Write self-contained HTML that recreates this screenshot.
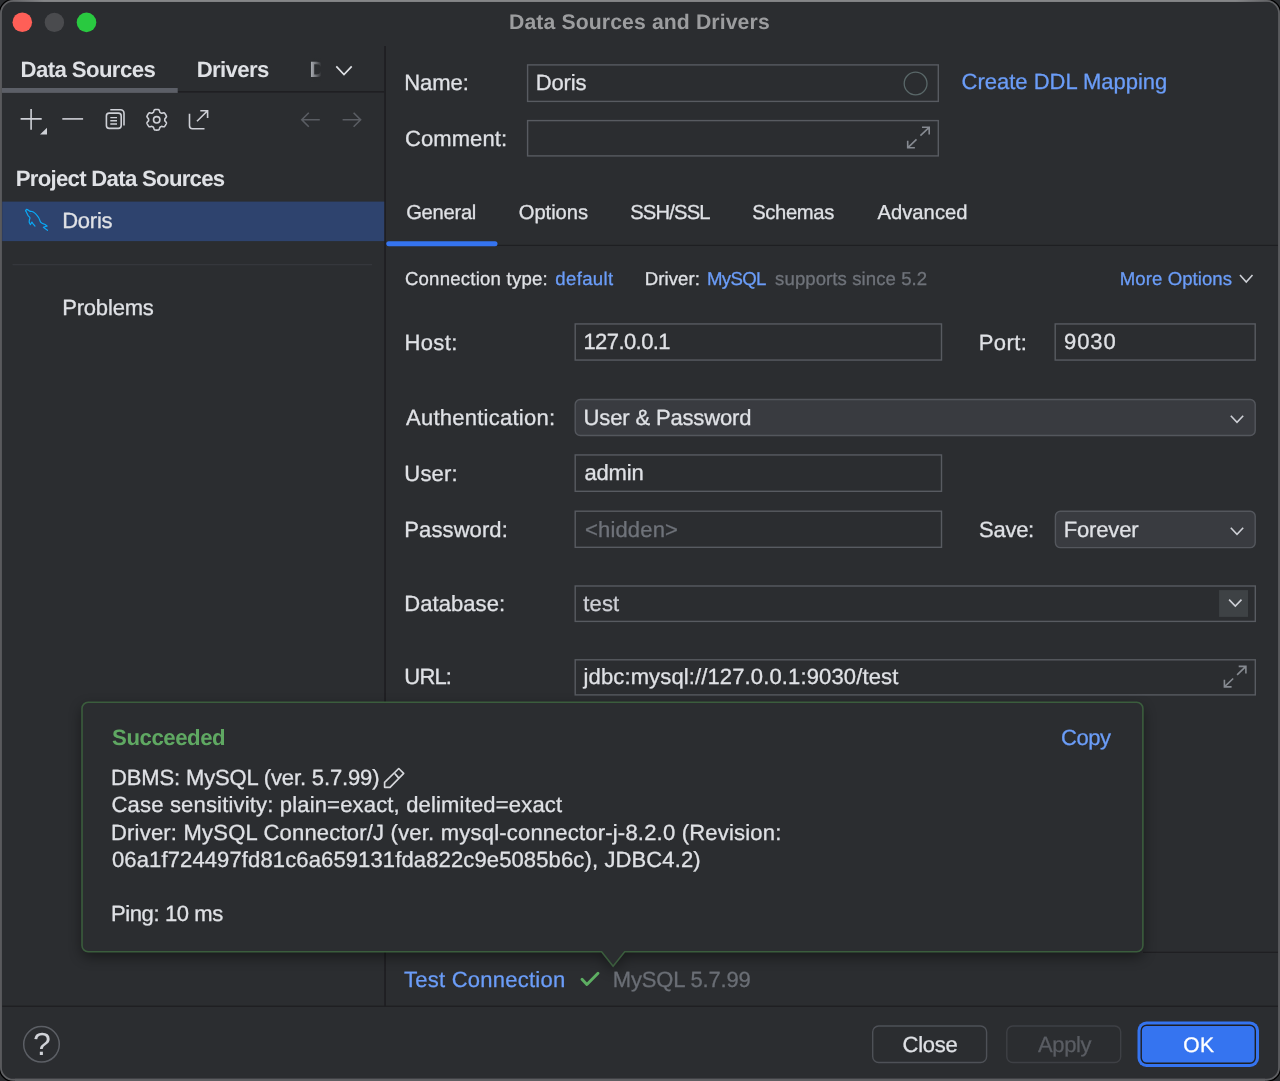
<!DOCTYPE html>
<html lang="en">
<head>
<meta charset="utf-8">
<title>Data Sources and Drivers</title>
<style>
html,body{margin:0;padding:0;}
body{width:1280px;height:1081px;overflow:hidden;background:#2b2d30;position:relative;font-family:"Liberation Sans",sans-serif;}
#shapes{position:absolute;left:0;top:0;display:block;}
#texts{position:absolute;left:0;top:0;width:1280px;height:1081px;will-change:transform;text-rendering:geometricPrecision;}
.t{position:absolute;white-space:pre;line-height:1;font-family:"Liberation Sans",sans-serif;-webkit-text-stroke:0.3px currentColor;}
#t_dfade{position:absolute;left:309.6px;top:58px;width:11.8px;height:24px;overflow:hidden;}
#t_dfade .t{left:0;top:1px;}
#t_dfade i{position:absolute;left:0;top:0;width:100%;height:100%;background:linear-gradient(90deg,rgba(43,45,48,0) 10%,rgba(43,45,48,0.9) 95%);}
</style>
</head>
<body>
<svg id="shapes" width="1280" height="1081" viewBox="0 0 1280 1081">
<defs><filter id="sh" x="-5%" y="-10%" width="110%" height="125%"><feGaussianBlur stdDeviation="7"/></filter><linearGradient id="fade" x1="0" x2="1" y1="0" y2="0"><stop offset="0" stop-color="#2b2d30" stop-opacity="0"/><stop offset="1" stop-color="#2b2d30" stop-opacity="1"/></linearGradient><linearGradient id="topg" x1="0" x2="1" y1="0" y2="0"><stop offset="0" stop-color="#858688" stop-opacity="0"/><stop offset="0.03" stop-color="#858688" stop-opacity="1"/><stop offset="0.97" stop-color="#858688" stop-opacity="1"/><stop offset="1" stop-color="#858688" stop-opacity="0"/></linearGradient></defs>
<rect x="-0.4" y="-0.4" width="1280.8" height="1081.6" rx="13.6" fill="none" stroke="#000" stroke-width="1.6"/>
<rect x="0.95" y="0.95" width="1278.1" height="1078.8" rx="12.3" fill="#2b2d30" stroke="#5d5e61" stroke-width="1.8"/>
<rect x="6" y="0" width="1268" height="1.9" fill="url(#topg)"/>
<path d="M15 1080H1265" stroke="#5d5e61" stroke-width="2.4" fill="none"/>
<circle cx="22.3" cy="22.3" r="9.8" fill="#ff5f57"/>
<circle cx="54.4" cy="22.4" r="9.7" fill="#4a4b4e"/>
<circle cx="86.5" cy="22.4" r="9.8" fill="#29c940"/>
<rect x="2" y="91.1" width="382.2" height="1.5" fill="#1e1f22"/>
<rect x="2" y="88" width="175.7" height="4.9" fill="#5c5f67"/>
<rect x="384.2" y="46" width="1.7" height="960.6" fill="#1e1f22"/>
<rect x="2.2" y="201.6" width="382" height="39.5" fill="#2e436e"/>
<rect x="12.5" y="264.2" width="359.5" height="1" fill="#393b40"/>
<g fill="none" stroke="#ced0d6" stroke-width="1.6">
<path d="M20.6 118.9H41.7M31.1 108.9V129.7"/>
<path d="M62.3 118.9H83.1"/>
<rect x="106.4" y="113.1" width="14.8" height="15.3" rx="2.8"/>
<path d="M110.3 109.8H120.6A3.4 3.4 0 0 1 124 113.2V125.5"/>
<path d="M110.3 117.6H117M110.3 120.8H117M110.3 124H117" stroke-width="1.4"/>
<path d="M189.5 113.7V125.8A3 3 0 0 0 192.5 128.8H204.5"/>
<path d="M197 121.3L207.3 111M200.3 110.7H207.6V117.9"/>
</g>
<path d="M47 127.8V134.4H40Z" fill="#ced0d6"/>
<path d="M164.80 119.80L164.79 120.22L164.79 120.65L165.19 121.15L165.68 121.71L166.19 122.34L166.50 122.98L166.32 123.49L166.11 123.99L165.88 124.48L165.62 124.95L165.34 125.41L165.03 125.85L164.70 126.28L164.35 126.69L163.65 126.75L162.84 126.62L162.11 126.48L161.48 126.38L161.11 126.59L160.75 126.81L160.38 127.02L160.01 127.23L159.78 127.83L159.54 128.53L159.24 129.29L158.84 129.87L158.31 129.97L157.78 130.04L157.24 130.09L156.70 130.10L156.16 130.09L155.62 130.04L155.09 129.97L154.56 129.87L154.16 129.29L153.86 128.53L153.62 127.83L153.39 127.23L153.02 127.02L152.65 126.81L152.29 126.59L151.92 126.38L151.29 126.48L150.56 126.62L149.75 126.75L149.05 126.69L148.70 126.28L148.37 125.85L148.06 125.41L147.78 124.95L147.52 124.48L147.29 123.99L147.08 123.49L146.90 122.98L147.21 122.34L147.72 121.71L148.21 121.15L148.61 120.65L148.61 120.22L148.60 119.80L148.61 119.38L148.61 118.95L148.21 118.45L147.72 117.89L147.21 117.26L146.90 116.62L147.08 116.11L147.29 115.61L147.52 115.12L147.78 114.65L148.06 114.19L148.37 113.75L148.70 113.32L149.05 112.91L149.75 112.85L150.56 112.98L151.29 113.12L151.92 113.22L152.29 113.01L152.65 112.79L153.02 112.58L153.39 112.37L153.62 111.77L153.86 111.07L154.16 110.31L154.56 109.73L155.09 109.63L155.62 109.56L156.16 109.51L156.70 109.50L157.24 109.51L157.78 109.56L158.31 109.63L158.84 109.73L159.24 110.31L159.54 111.07L159.78 111.77L160.01 112.37L160.38 112.58L160.75 112.79L161.11 113.01L161.48 113.22L162.11 113.12L162.84 112.98L163.65 112.85L164.35 112.91L164.70 113.32L165.03 113.75L165.34 114.19L165.62 114.65L165.88 115.12L166.11 115.61L166.32 116.11L166.50 116.62L166.19 117.26L165.68 117.89L165.19 118.45L164.79 118.95L164.79 119.38Z" fill="none" stroke="#ced0d6" stroke-width="1.6" stroke-linejoin="round"/>
<circle cx="156.7" cy="119.8" r="3.2" fill="none" stroke="#ced0d6" stroke-width="1.6"/>
<g fill="none" stroke="#5a5d63" stroke-width="1.6">
<path d="M301.6 119.8H319.8M308.8 112.8L301.8 119.8L308.8 126.8"/>
<path d="M342.6 119.8H360.8M353.6 112.8L360.6 119.8L353.6 126.8"/>
</g>
<path d="M336.30 66.40L344.00 74.60L351.70 66.40" fill="none" stroke="#dfe1e5" stroke-width="1.7" stroke-linecap="butt" stroke-linejoin="miter"/>
<g fill="none" stroke="#0aa9f6" stroke-width="1.2" stroke-linejoin="round" stroke-linecap="round">
<path d="M25.73 210.79C25.82 210.58 25.97 209.74 26.26 209.56C26.55 209.37 26.93 209.41 27.49 209.66C28.05 209.91 28.84 210.76 29.60 211.07C30.36 211.37 31.24 211.19 32.06 211.49C32.88 211.79 33.70 212.25 34.52 212.90C35.34 213.54 36.28 214.54 36.98 215.36C37.68 216.18 38.27 217.00 38.74 217.82C39.21 218.64 39.44 219.52 39.79 220.28C40.14 221.04 40.38 221.86 40.85 222.39C41.32 222.91 41.90 223.09 42.60 223.44C43.31 223.79 44.35 224.06 45.07 224.50C45.78 224.93 46.59 225.78 46.89 226.04"/>
<path d="M46.89 226.04L43.38 227.38L47.46 230.33"/>
<path d="M25.73 210.79C25.91 211.14 26.38 212.08 26.79 212.90C27.20 213.72 27.67 214.89 28.19 215.71C28.72 216.53 29.75 217.11 29.95 217.82C30.16 218.52 29.54 219.16 29.42 219.93C29.31 220.69 29.07 221.63 29.25 222.39C29.42 223.15 30.27 224.14 30.48 224.50"/>
<path d="M30.48 224.50L31.88 222.04L33.11 223.79L34.98 226.11"/>
</g>
<circle cx="30.83" cy="213.78" r="0.55" fill="#0aa9f6" opacity="0.45"/>
<rect x="527.60" y="64.90" width="410.70" height="36.50" rx="0" fill="none" stroke="#585b61" stroke-width="1.4"/>
<rect x="527.60" y="120.60" width="410.70" height="35.30" rx="0" fill="none" stroke="#585b61" stroke-width="1.4"/>
<circle cx="915.6" cy="83.5" r="11.4" fill="none" stroke="#5a6869" stroke-width="1.3"/>
<g fill="none" stroke="#868a91" stroke-width="1.6" stroke-linecap="butt" stroke-linejoin="miter"><path d="M920.4 135.7L929.2 127.3M922.0 127.3H929.2V134.4"/><path d="M916.5 139.4L907.7 147.8M907.7 140.7V147.8H914.9"/></g>
<rect x="386" y="244.8" width="892" height="1.2" fill="#1e1f22"/>
<rect x="386.25" y="241.25" width="111.25" height="5" rx="2.5" fill="#3574f0"/>
<path d="M1240.00 275.00L1246.25 282.00L1252.50 275.00" fill="none" stroke="#ced0d6" stroke-width="1.6" stroke-linecap="butt" stroke-linejoin="miter"/>
<rect x="575.20" y="323.95" width="366.30" height="36.10" rx="0" fill="none" stroke="#585b61" stroke-width="1.4"/>
<rect x="1055.20" y="323.95" width="200.00" height="36.10" rx="0" fill="none" stroke="#585b61" stroke-width="1.4"/>
<rect x="575.20" y="399.45" width="680.00" height="36.10" rx="5" fill="#393b40" stroke="#54575d" stroke-width="1.4"/>
<path d="M1230.80 415.80L1237.00 422.30L1243.20 415.80" fill="none" stroke="#ced0d6" stroke-width="1.6" stroke-linecap="butt" stroke-linejoin="miter"/>
<rect x="575.20" y="454.95" width="366.30" height="36.35" rx="0" fill="none" stroke="#585b61" stroke-width="1.4"/>
<rect x="575.20" y="511.20" width="366.30" height="36.10" rx="0" fill="none" stroke="#585b61" stroke-width="1.4"/>
<rect x="1055.40" y="511.30" width="199.80" height="36.30" rx="5" fill="#393b40" stroke="#54575d" stroke-width="1.4"/>
<path d="M1230.80 527.75L1237.00 534.25L1243.20 527.75" fill="none" stroke="#ced0d6" stroke-width="1.6" stroke-linecap="butt" stroke-linejoin="miter"/>
<rect x="575.20" y="586.00" width="680.10" height="35.40" rx="0" fill="none" stroke="#585b61" stroke-width="1.4"/>
<rect x="1219.1" y="590.1" width="28.9" height="26.8" fill="#3e4245"/>
<path d="M1229.10 599.65L1235.30 606.15L1241.50 599.65" fill="none" stroke="#ced0d6" stroke-width="1.6" stroke-linecap="butt" stroke-linejoin="miter"/>
<rect x="575.20" y="659.80" width="680.10" height="35.10" rx="0" fill="none" stroke="#585b61" stroke-width="1.4"/>
<g fill="none" stroke="#868a91" stroke-width="1.6" stroke-linecap="butt" stroke-linejoin="miter"><path d="M1237.1 674.8L1245.9 666.4M1238.7 666.4H1245.9V673.5"/><path d="M1233.2 678.5L1224.4 686.9M1224.4 679.8V686.9H1231.6"/></g>
<rect x="1143" y="951.7" width="135" height="1.2" fill="#1e1f22"/>
<rect x="2.2" y="1005.6" width="1275.8" height="1.3" fill="#1e1f22"/>
<g filter="url(#sh)" opacity="0.45"><path d="M88.2 702.3H1136.7A6.2 6.2 0 0 1 1142.9 708.5V945.55A6.2 6.2 0 0 1 1136.7 951.75H624.7L613.1 966.2L601.6 951.75H88.2A6.2 6.2 0 0 1 82 945.55V708.5A6.2 6.2 0 0 1 88.2 702.3Z" transform="translate(0,5)" fill="#000"/></g>
<path d="M88.2 702.3H1136.7A6.2 6.2 0 0 1 1142.9 708.5V945.55A6.2 6.2 0 0 1 1136.7 951.75H624.7L613.1 966.2L601.6 951.75H88.2A6.2 6.2 0 0 1 82 945.55V708.5A6.2 6.2 0 0 1 88.2 702.3Z" fill="#2b2d30" stroke="#3b5d3d" stroke-width="1.6"/>
<path d="M384.6 787.3V782.4L398.75 768.5L403.7 773.3L390 787.3Z M394.9 773.6L398.5 777.9" fill="none" stroke="#d6d8dc" stroke-width="1.65" stroke-linejoin="round"/>
<path d="M582 979.2L586.9 984.5L598 973.2" fill="none" stroke="#5dae62" stroke-width="2.9" stroke-linecap="round" stroke-linejoin="round"/>
<circle cx="41.5" cy="1044.3" r="17.8" fill="none" stroke="#5c5f65" stroke-width="1.5"/>
<rect x="872.70" y="1026.00" width="113.90" height="36.50" rx="6" fill="none" stroke="#4e5157" stroke-width="1.4"/>
<rect x="1006.80" y="1026.00" width="113.90" height="36.50" rx="6" fill="none" stroke="#3e4045" stroke-width="1.4"/>
<rect x="1137.5" y="1021.5" width="121.5" height="45.5" rx="9" fill="#3574f0"/>
<rect x="1141.2" y="1025.2" width="114.1" height="38.1" rx="5.5" fill="#3574f0" stroke="#1e1f22" stroke-width="1.4"/>
</svg>
<div id="texts">
<div class="grp" id="titlebar">
<span class="t" id="t_title" style="left:509.02px;top:12.00px;font-size:21.2px;letter-spacing:0.120px;color:#9c9d9f;font-weight:bold;-webkit-text-stroke:0;">Data Sources and Drivers</span>
</div>
<div class="grp" id="sidebar">
<span class="t" id="t_tab1" style="left:20.49px;top:59.00px;font-size:22.2px;letter-spacing:-0.598px;color:#dfe1e5;font-weight:bold;-webkit-text-stroke:0;">Data Sources</span>
<span class="t" id="t_tab2" style="left:196.69px;top:59.00px;font-size:22.2px;letter-spacing:-0.656px;color:#dfe1e5;font-weight:bold;-webkit-text-stroke:0;">Drivers</span>
<span class="t" id="t_pds" style="left:15.71px;top:168.00px;font-size:22.2px;letter-spacing:-0.721px;color:#dfe1e5;font-weight:bold;-webkit-text-stroke:0;">Project Data Sources</span>
<span class="t" id="t_doris" style="left:62.13px;top:210.00px;font-size:22.0px;letter-spacing:-0.217px;color:#dfe1e5;">Doris</span>
<span class="t" id="t_problems" style="left:62.13px;top:297.00px;font-size:22.0px;letter-spacing:-0.170px;color:#dfe1e5;">Problems</span>
<div id="t_dfade"><span class="t" style="font-size:22.2px;font-weight:bold;-webkit-text-stroke:0;color:#a8abb1;">D</span><i></i></div>
</div>
<div class="grp" id="header">
<span class="t" id="t_name" style="left:404.33px;top:72.00px;font-size:22.0px;letter-spacing:-0.096px;color:#dfe1e5;">Name:</span>
<span class="t" id="t_namev" style="left:535.72px;top:72.00px;font-size:22.0px;letter-spacing:-0.128px;color:#dfe1e5;">Doris</span>
<span class="t" id="t_comment" style="left:404.99px;top:128.00px;font-size:22.0px;letter-spacing:0.082px;color:#dfe1e5;">Comment:</span>
<span class="t" id="t_ddl" style="left:961.55px;top:71.00px;font-size:22.0px;letter-spacing:-0.006px;color:#6b9df8;">Create DDL Mapping</span>
</div>
<div class="grp" id="tabs">
<span class="t" id="t_general" style="left:406.19px;top:203.00px;font-size:20.2px;letter-spacing:-0.279px;color:#dfe1e5;">General</span>
<span class="t" id="t_options" style="left:518.73px;top:203.00px;font-size:20.2px;letter-spacing:-0.031px;color:#dfe1e5;">Options</span>
<span class="t" id="t_ssh" style="left:630.20px;top:203.00px;font-size:20.2px;letter-spacing:-0.823px;color:#dfe1e5;">SSH/SSL</span>
<span class="t" id="t_schemas" style="left:752.20px;top:203.00px;font-size:20.2px;letter-spacing:-0.346px;color:#dfe1e5;">Schemas</span>
<span class="t" id="t_advanced" style="left:877.52px;top:203.00px;font-size:20.2px;letter-spacing:0.024px;color:#dfe1e5;">Advanced</span>
</div>
<div class="grp" id="general-form">
<span class="t" id="t_conntype" style="left:404.90px;top:270.00px;font-size:18.6px;letter-spacing:0.218px;color:#dfe1e5;">Connection type:</span>
<span class="t" id="t_default" style="left:555.35px;top:270.00px;font-size:18.6px;letter-spacing:0.312px;color:#6b9df8;">default</span>
<span class="t" id="t_driver" style="left:644.74px;top:270.00px;font-size:18.6px;letter-spacing:0.075px;color:#dfe1e5;">Driver:</span>
<span class="t" id="t_mysql" style="left:707.06px;top:270.00px;font-size:18.6px;letter-spacing:-0.677px;color:#6b9df8;">MySQL</span>
<span class="t" id="t_supports" style="left:775.11px;top:270.00px;font-size:18.6px;letter-spacing:0.066px;color:#6f737a;">supports since 5.2</span>
<span class="t" id="t_more" style="left:1119.84px;top:270.00px;font-size:18.6px;letter-spacing:0.056px;color:#6b9df8;">More Options</span>
<span class="t" id="t_host" style="left:404.38px;top:332.00px;font-size:22.0px;letter-spacing:0.432px;color:#dfe1e5;">Host:</span>
<span class="t" id="t_hostv" style="left:583.47px;top:331.00px;font-size:22.0px;letter-spacing:-0.584px;color:#dfe1e5;">127.0.0.1</span>
<span class="t" id="t_port" style="left:978.73px;top:332.00px;font-size:22.0px;letter-spacing:0.404px;color:#dfe1e5;">Port:</span>
<span class="t" id="t_portv" style="left:1063.98px;top:331.00px;font-size:22.0px;letter-spacing:0.967px;color:#dfe1e5;">9030</span>
<span class="t" id="t_auth" style="left:405.97px;top:407.00px;font-size:22.0px;letter-spacing:0.254px;color:#dfe1e5;">Authentication:</span>
<span class="t" id="t_authv" style="left:583.58px;top:407.00px;font-size:22.0px;letter-spacing:-0.148px;color:#dfe1e5;">User &amp; Password</span>
<span class="t" id="t_user" style="left:404.34px;top:463.00px;font-size:22.0px;letter-spacing:0.165px;color:#dfe1e5;">User:</span>
<span class="t" id="t_userv" style="left:584.39px;top:462.00px;font-size:22.0px;letter-spacing:-0.158px;color:#dfe1e5;">admin</span>
<span class="t" id="t_pass" style="left:404.34px;top:519.00px;font-size:22.0px;letter-spacing:0.098px;color:#dfe1e5;">Password:</span>
<span class="t" id="t_passv" style="left:585.00px;top:519.00px;font-size:22.0px;letter-spacing:0.164px;color:#6f737a;">&lt;hidden&gt;</span>
<span class="t" id="t_save" style="left:979.08px;top:519.00px;font-size:22.0px;letter-spacing:-0.287px;color:#dfe1e5;">Save:</span>
<span class="t" id="t_savev" style="left:1063.67px;top:519.00px;font-size:22.0px;letter-spacing:-0.136px;color:#dfe1e5;">Forever</span>
<span class="t" id="t_db" style="left:404.34px;top:593.00px;font-size:22.0px;letter-spacing:0.052px;color:#dfe1e5;">Database:</span>
<span class="t" id="t_dbv" style="left:583.31px;top:593.00px;font-size:22.0px;letter-spacing:0.159px;color:#ced0d6;">test</span>
<span class="t" id="t_url" style="left:404.34px;top:666.00px;font-size:22.0px;letter-spacing:-0.831px;color:#dfe1e5;">URL:</span>
<span class="t" id="t_urlv" style="left:583.52px;top:666.00px;font-size:22.0px;letter-spacing:0.133px;color:#dfe1e5;">jdbc:mysql://127.0.0.1:9030/test</span>
</div>
<div class="grp" id="result-popup">
<span class="t" id="t_succ" style="left:112.04px;top:727.00px;font-size:22.2px;letter-spacing:-0.440px;color:#5fa862;font-weight:bold;-webkit-text-stroke:0;">Succeeded</span>
<span class="t" id="t_copy" style="left:1060.98px;top:727.00px;font-size:22.0px;letter-spacing:-0.450px;color:#6b9df8;">Copy</span>
<span class="t" id="t_l1" style="left:110.98px;top:767.00px;font-size:22.0px;letter-spacing:-0.135px;color:#dfe1e5;">DBMS: MySQL (ver. 5.7.99)</span>
<span class="t" id="t_l2" style="left:111.55px;top:794.00px;font-size:22.0px;letter-spacing:0.175px;color:#dfe1e5;">Case sensitivity: plain=exact, delimited=exact</span>
<span class="t" id="t_l3" style="left:110.98px;top:822.00px;font-size:22.0px;letter-spacing:0.207px;color:#dfe1e5;">Driver: MySQL Connector/J (ver. mysql-connector-j-8.2.0 (Revision:</span>
<span class="t" id="t_l4" style="left:111.96px;top:849.00px;font-size:22.0px;letter-spacing:0.129px;color:#dfe1e5;">06a1f724497fd81c6a659131fda822c9e5085b6c), JDBC4.2)</span>
<span class="t" id="t_ping" style="left:110.98px;top:903.00px;font-size:22.0px;letter-spacing:-0.390px;color:#dfe1e5;">Ping: 10 ms</span>
</div>
<div class="grp" id="test-row">
<span class="t" id="t_test" style="left:403.91px;top:969.00px;font-size:22.0px;letter-spacing:0.253px;color:#6b9df8;">Test Connection</span>
<span class="t" id="t_ver" style="left:612.72px;top:969.00px;font-size:22.0px;letter-spacing:-0.159px;color:#6a6e75;">MySQL 5.7.99</span>
</div>
<div class="grp" id="footer">
<span class="t" id="t_close" style="left:902.60px;top:1034.00px;font-size:22.0px;letter-spacing:-0.256px;color:#dfe1e5;">Close</span>
<span class="t" id="t_apply" style="left:1037.96px;top:1034.00px;font-size:22.0px;letter-spacing:-0.346px;color:#5a5d63;">Apply</span>
<span class="t" id="t_ok" style="left:1183.29px;top:1035.00px;font-size:21px;letter-spacing:0.482px;color:#ffffff;">OK</span>
<span class="t" id="t_help" style="left:32.9px;top:1028px;font-size:32px;-webkit-text-stroke:0;color:#d0d2d7;">?</span>
</div>
</div>
</body>
</html>
